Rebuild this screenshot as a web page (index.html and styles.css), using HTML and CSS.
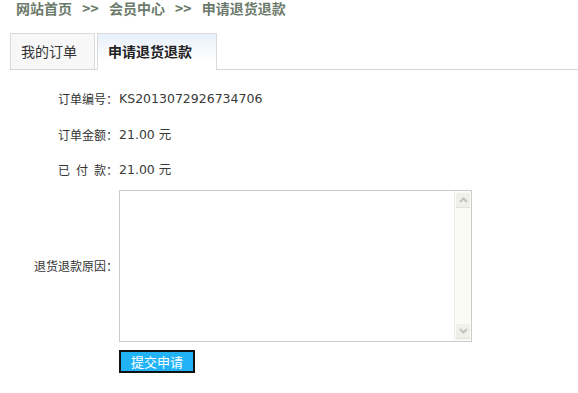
FILE: index.html
```html
<!DOCTYPE html>
<html lang="zh-CN">
<head>
<meta charset="utf-8">
<title>申请退货退款</title>
<link rel="stylesheet" href="styles.css">
</head>
<body>
<div class="crumb">网站首页 &gt;&gt; 会员中心 &gt;&gt; 申请退货退款</div>
<div class="tabs">
  <div class="tab">我的订单</div>
  <div class="tab active">申请退货退款</div>
</div>
<div class="form">
  <div class="row info"><span class="label">订单编号：</span><span class="value">KS2013072926734706</span></div>
  <div class="row info"><span class="label">订单金额：</span><span class="value">21.00 元</span></div>
  <div class="row info"><span class="label">已&ensp;付&ensp;款：</span><span class="value">21.00 元</span></div>
  <div class="row reason">
    <span class="label">退货退款原因：</span>
    <div class="box">
      <textarea class="area"></textarea>
      <div class="sbar">
        <div class="sbtn"><svg width="9" height="6" viewBox="0 0 9 6"><path d="M1 5 L4.5 1.5 L8 5" fill="none" stroke="#c4c4bc" stroke-width="2"/></svg></div>
        <div class="strack"></div>
        <div class="sbtn"><svg width="9" height="6" viewBox="0 0 9 6"><path d="M1 1 L4.5 4.5 L8 1" fill="none" stroke="#c4c4bc" stroke-width="2"/></svg></div>
      </div>
    </div>
  </div>
  <div class="row submit">
    <span class="label"></span>
    <button class="btn">提交申请</button>
  </div>
</div>
</body>
</html>
```
FILE: styles.css
```css
html, body {
  margin: 0;
  padding: 0;
  background: #fff;
}
body {
  font-family: "DejaVu Sans", "Noto Sans CJK SC", sans-serif;
  font-size: 12px;
  color: #333;
}
.crumb {
  font-family: "Noto Sans CJK SC", sans-serif;
  font-weight: bold;
  font-size: 14px;
  line-height: 16px;
  color: #6b7a6b;
  padding-left: 16px;
  height: 16px;
  word-spacing: 7px;
}
.tabs {
  display: flex;
  gap: 2px;
  margin-top: 17px;
  margin-left: 10px;
  border-bottom: 1px solid #d6d6d6;
  height: 36px;
}
.tab {
  font-family: "Noto Sans CJK SC", sans-serif;
  font-size: 14px;
  color: #333;
  height: 35px;
  line-height: 35px;
  border: 1px solid #dadada;
  border-bottom: none;
  background: #f7f7f7;
  padding: 0 11px 0 10px;
  width: 62px;
}
.tab.active {
  width: 97px;
  font-weight: bold;
  color: #222;
  height: 36px;
  background: linear-gradient(#e8f0fa, #ffffff 75%);
}
.form {
  margin-top: 22px;
  display: flex;
  flex-direction: column;
}
.row {
  display: flex;
  align-items: center;
}
.info {
  height: 14px;
  line-height: 14px;
  margin-bottom: 21.5px;
}
.label {
  width: 118px;
  flex: none;
  text-align: right;
  font-family: "Noto Sans CJK SC", sans-serif;
  color: #333;
}
.value {
  margin-left: 1px;
  color: #3a3a3a;
  font-size: 12.5px;
}
.reason {
  margin-top: -9px;
}
.box {
  margin-left: 1px;
  width: 351px;
  height: 150px;
  border: 1px solid #cccccc;
  display: flex;
  background: #fff;
}
.area {
  flex: 1;
  border: none;
  outline: none;
  resize: none;
  margin: 0;
  padding: 2px;
  font-size: 12px;
  background: #fff;
}
.sbar {
  width: 16px;
  border-left: 1px solid #ededea;
  background: #fbfbf6;
  display: flex;
  flex-direction: column;
  align-items: center;
  padding: 2px 0;
}
.sbtn {
  width: 14px;
  height: 14px;
  background: #f0f0ea;
  border-bottom: 1px solid #e2e2da;
  display: flex;
  align-items: center;
  justify-content: center;
}
.strack {
  flex: 1;
}
.submit {
  margin-top: 8px;
}
.btn {
  margin-left: 1px;
  width: 76px;
  height: 23px;
  border: 2px solid #111;
  background: #22b3f7;
  color: #fff;
  font-family: "Noto Sans CJK SC", sans-serif;
  font-size: 13px;
  line-height: 17px;
  padding: 0;
}
```
